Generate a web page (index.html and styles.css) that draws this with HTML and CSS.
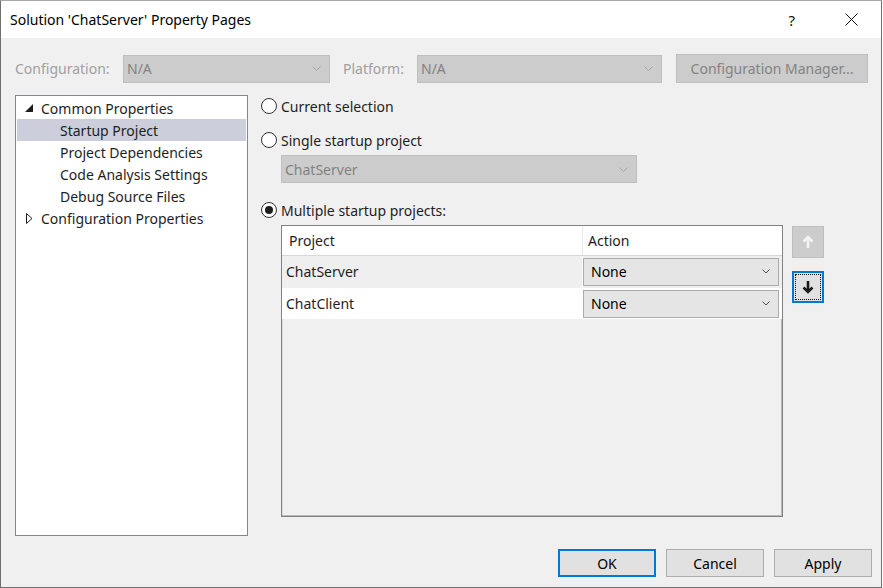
FILE: index.html
```html
<!DOCTYPE html>
<html>
<head>
<meta charset="utf-8">
<link rel="stylesheet" href="styles.css">
</head>
<body>
<div class="window">
  <div class="titlebar">
    <span class="title">Solution 'ChatServer' Property Pages</span>
    <div class="caption">
      <span class="help">?</span>
      <svg class="close" width="13" height="13" viewBox="0 0 13 13"><path d="M0.5 0.5 L12.5 12.5 M12.5 0.5 L0.5 12.5" stroke="#111" stroke-width="1" fill="none"/></svg>
    </div>
  </div>
  <div class="content">
    <div class="config-row">
      <span class="lbl lbl-config">Configuration:</span>
      <div class="combo disabled combo-config"><span>N/A</span><svg class="chev" width="9" height="5" viewBox="0 0 9 5"><path d="M0.5 0.5 L4.5 4.5 L8.5 0.5" stroke="#a6a6a6" fill="none"/></svg></div>
      <span class="lbl lbl-platform">Platform:</span>
      <div class="combo disabled combo-platform"><span>N/A</span><svg class="chev" width="9" height="5" viewBox="0 0 9 5"><path d="M0.5 0.5 L4.5 4.5 L8.5 0.5" stroke="#a6a6a6" fill="none"/></svg></div>
      <div class="btn disabled cfg-mgr">Configuration Manager...</div>
    </div>
    <div class="main">
      <div class="tree">
        <div class="node"><svg class="tw" width="8" height="8" viewBox="0 0 8 8"><path d="M8 0 L8 8 L0 8 Z" fill="#1e1e1e"/></svg><span>Common Properties</span></div>
        <div class="node child selected"><span>Startup Project</span></div>
        <div class="node child"><span>Project Dependencies</span></div>
        <div class="node child"><span>Code Analysis Settings</span></div>
        <div class="node child"><span>Debug Source Files</span></div>
        <div class="node"><svg class="tw tw-closed" width="7" height="11" viewBox="0 0 7 11"><path d="M0.5 0.5 L6 5.5 L0.5 10.5 Z" fill="none" stroke="#1e1e1e"/></svg><span>Configuration Properties</span></div>
      </div>
      <div class="page">
        <div class="radio-row"><span class="radio"></span><span>Current selection</span></div>
        <div class="radio-row r2"><span class="radio"></span><span>Single startup project</span></div>
        <div class="combo disabled combo-single"><span>ChatServer</span><svg class="chev" width="9" height="5" viewBox="0 0 9 5"><path d="M0.5 0.5 L4.5 4.5 L8.5 0.5" stroke="#a6a6a6" fill="none"/></svg></div>
        <div class="radio-row r3"><span class="radio checked"></span><span>Multiple startup projects:</span></div>
        <div class="grid-area">
          <div class="grid">
            <div class="grow ghead">
              <div class="c1">Project</div>
              <div class="c2">Action</div>
            </div>
            <div class="grow alt">
              <div class="c1">ChatServer</div>
              <div class="c2"><div class="combo cell-combo"><span>None</span><svg class="chev" width="8" height="5" viewBox="0 0 8 5"><path d="M0.5 0.5 L4 4 L7.5 0.5" stroke="#505050" fill="none"/></svg></div></div>
            </div>
            <div class="grow">
              <div class="c1">ChatClient</div>
              <div class="c2"><div class="combo cell-combo"><span>None</span><svg class="chev" width="8" height="5" viewBox="0 0 8 5"><path d="M0.5 0.5 L4 4 L7.5 0.5" stroke="#505050" fill="none"/></svg></div></div>
            </div>
          </div>
          <div class="movers">
            <div class="mv mv-up"><svg width="12" height="14" viewBox="0 0 12 14"><path d="M6 13 L6 2 M1.5 6.5 L6 2 L10.5 6.5" stroke="#f4f4f4" stroke-width="2.6" fill="none"/></svg></div>
            <div class="mv mv-down"><div class="focus"><svg width="12" height="14" viewBox="0 0 12 14"><path d="M6 1 L6 12 M1.5 7.5 L6 12 L10.5 7.5" stroke="#1a1a1a" stroke-width="2.6" fill="none"/></svg></div></div>
          </div>
        </div>
      </div>
    </div>
    <div class="footer">
      <div class="btn default">OK</div>
      <div class="btn">Cancel</div>
      <div class="btn">Apply</div>
    </div>
  </div>
</div>
</body>
</html>
```
FILE: styles.css
```css
html, body {
  margin: 0;
  padding: 0;
  background: #ffffff;
}
body {
  font-family: "Segoe UI", "Noto Sans", "Open Sans", sans-serif;
  font-size: 14px;
  color: #1e1e1e;
}
.window {
  width: 882px;
  height: 588px;
  box-sizing: border-box;
  border: 1px solid #707070;
  border-top-color: #a8a8a8;
  background: #f0f0f0;
  display: flex;
  flex-direction: column;
}
.titlebar {
  height: 37px;
  background: #ffffff;
  display: flex;
  align-items: center;
  padding-left: 9px;
  flex: none;
}
.title {
  font-size: 14px;
  color: #000;
  flex: 1;
  padding-bottom: 1px;
}
.caption {
  display: flex;
  align-items: center;
}
.help {
  font-size: 15px;
  color: #111;
  margin-right: 50px;
}
.close {
  margin-right: 23px;
  display: block;
}
.content {
  flex: 1;
  display: flex;
  flex-direction: column;
  padding: 16px 9px 0 14px;
}
.config-row {
  display: flex;
  align-items: center;
  height: 29px;
}
.lbl {
  color: #a0a0a0;
}
.lbl-config { width: 108px; }
.lbl-platform { width: 74px; margin-left: 13px; }
.combo {
  box-sizing: border-box;
  height: 28px;
  display: flex;
  align-items: center;
  justify-content: space-between;
  padding: 0 8px 0 3px;
  border: 1px solid #bfbfbf;
}
.combo.disabled {
  background: #cccccc;
  color: #838383;
}
.combo-config { width: 207px; }
.combo-platform { width: 245px; }
.chev { display: block; }
.btn {
  box-sizing: border-box;
  height: 28px;
  width: 98px;
  display: flex;
  align-items: center;
  justify-content: center;
  background: #e1e1e1;
  border: 1px solid #adadad;
  color: #000;
}
.btn.disabled {
  background: #cccccc;
  border-color: #bfbfbf;
  color: #838383;
}
.cfg-mgr {
  width: 192px;
  height: 29px;
  margin-left: 14px;
}
.main {
  display: flex;
  margin-top: 12px;
  height: 441px;
}
.tree {
  box-sizing: border-box;
  width: 233px;
  height: 441px;
  border: 1px solid #828790;
  background: #ffffff;
  padding: 1px;
}
.node {
  height: 22px;
  display: flex;
  align-items: center;
  padding-left: 24px;
  position: relative;
}
.node.child { padding-left: 43px; }
.node.selected { background: #cccedb; }
.tw {
  position: absolute;
  left: 8px;
  top: 7px;
}
.tw-closed {
  left: 9px;
  top: 6px;
}
.page {
  margin-left: 13px;
  display: flex;
  flex-direction: column;
}
.radio-row {
  height: 22px;
  display: flex;
  align-items: center;
}
.radio-row.r2 { margin-top: 12px; }
.radio-row.r3 { margin-top: 16px; }
.radio {
  box-sizing: border-box;
  width: 16px;
  height: 16px;
  border-radius: 50%;
  border: 1px solid #333;
  background: #fff;
  margin-right: 4px;
  position: relative;
}
.radio.checked::after {
  content: "";
  position: absolute;
  left: 3px;
  top: 3px;
  width: 8px;
  height: 8px;
  border-radius: 50%;
  background: #1e1e1e;
}
.combo-single {
  width: 356px;
  margin-left: 20px;
  margin-top: 4px;
}
.grid-area {
  display: flex;
  margin-top: 4px;
  margin-left: 20px;
}
.grid {
  box-sizing: border-box;
  width: 502px;
  height: 292px;
  border: 1px solid #828282;
  box-shadow: inset -1px -1px 0 #b9b9b9, inset 1px 1px 0 #dcdcdc;
  background: #f0f0f0;
}
.grow {
  display: flex;
  height: 31px;
}
.grow .c1 {
  width: 300px;
  display: flex;
  align-items: center;
  padding-left: 4px;
  padding-bottom: 1px;
  box-sizing: border-box;
}
.grow .c2 {
  flex: 1;
  display: flex;
  align-items: center;
  padding-left: 0;
  padding-right: 3px;
  border-left: 1px solid #ffffff;
}
.ghead {
  height: 29px;
  background: #ffffff;
  border-bottom: 1px solid #d8d8d8;
}
.ghead .c1 { padding-left: 7px; }
.ghead .c2 { padding-left: 5px; border-left: 1px solid #e8e8e8; }
.grow.alt { background: #efefef; height: 32px; }
.grow:not(.ghead):not(.alt) { background: #ffffff; }
.cell-combo {
  width: 100%;
  height: 28px;
  background: #e5e5e5;
  border-color: #acacac;
  color: #000;
  padding-left: 7px;
  padding-bottom: 1px;
}
.movers {
  margin-left: 9px;
  margin-top: 1px;
  display: flex;
  flex-direction: column;
}
.mv {
  box-sizing: border-box;
  width: 32px;
  height: 32px;
  display: flex;
  align-items: center;
  justify-content: center;
}
.mv svg { display: block; }
.mv-up {
  background: #cccccc;
  border: 1px solid #bfbfbf;
}
.mv-down {
  margin-top: 13px;
  background: #e1e1e1;
  border: 2px solid #0078d7;
  padding: 1px;
}
.focus {
  width: 100%;
  height: 100%;
  box-sizing: border-box;
  border: 1px dotted #111;
  display: flex;
  align-items: center;
  justify-content: center;
}
.footer {
  display: flex;
  justify-content: flex-end;
  gap: 10px;
  margin-top: 13px;
}
.btn.default {
  border: 2px solid #0078d7;
}
```
